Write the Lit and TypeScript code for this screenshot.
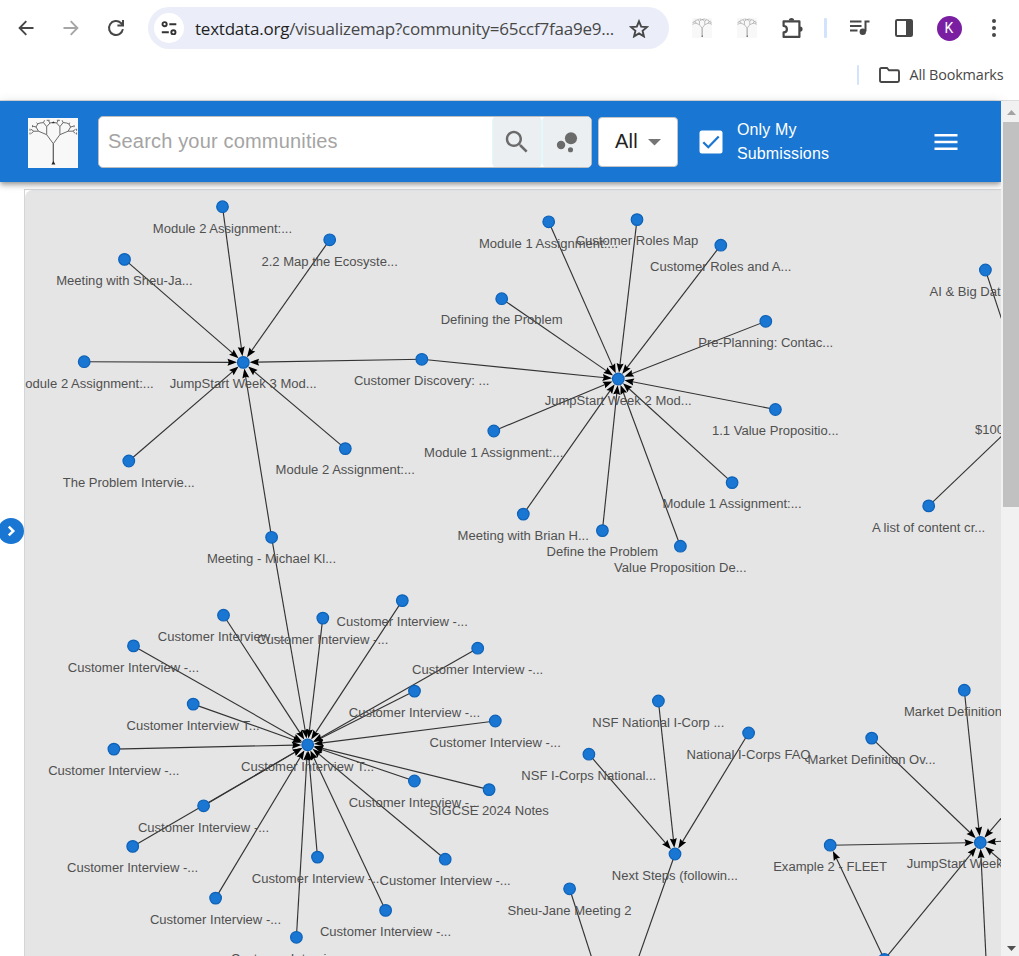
import { LitElement, html, svg, css } from "lit";
import { customElement } from "lit/decorators.js";

type GraphNode = { id: string; x: number; y: number; label: string; start?: number; dy?: number };

const CI = "Customer Interview -...";

const NODES: GraphNode[] = [
  { id: "a1", x: 222.5, y: 206.7, label: "Module 2 Assignment:..." },
  { id: "a2", x: 329.7, y: 239.8, label: "2.2 Map the Ecosyste..." },
  { id: "a3", x: 124.5, y: 259.4, label: "Meeting with Sheu-Ja..." },
  { id: "a4", x: 84.2, y: 361.7, label: "Module 2 Assignment:..." },
  { id: "A", x: 243.3, y: 362.4, label: "JumpStart Week 3 Mod..." },
  { id: "ab", x: 421.8, y: 359.3, label: "Customer Discovery: ..." },
  { id: "a5", x: 128.8, y: 461, label: "The Problem Intervie..." },
  { id: "a6", x: 345.3, y: 448.6, label: "Module 2 Assignment:...", dy: -0.5 },
  { id: "ac", x: 271.6, y: 537.3, label: "Meeting - Michael Kl..." },
  { id: "b1", x: 548.7, y: 221.8, label: "Module 1 Assignment:..." },
  { id: "b2", x: 637, y: 219.6, label: "Customer Roles Map", dy: -1 },
  { id: "b3", x: 720.8, y: 245.2, label: "Customer Roles and A..." },
  { id: "b4", x: 501.7, y: 298.7, label: "Defining the Problem", dy: -1 },
  { id: "b5", x: 765.8, y: 321.3, label: "Pre-Planning: Contac..." },
  { id: "B", x: 618.3, y: 379, label: "JumpStart Week 2 Mod..." },
  { id: "b6", x: 775.4, y: 409.5, label: "1.1 Value Propositio...", dy: -1 },
  { id: "b7", x: 493.8, y: 431, label: "Module 1 Assignment:..." },
  { id: "b8", x: 732.1, y: 482.6, label: "Module 1 Assignment:...", dy: -1 },
  { id: "b9", x: 523.3, y: 514.1, label: "Meeting with Brian H..." },
  { id: "b10", x: 602.4, y: 530.6, label: "Define the Problem", dy: -1 },
  { id: "b11", x: 680.4, y: 546.2, label: "Value Proposition De..." },
  { id: "c1", x: 223.5, y: 615.2, label: CI },
  { id: "c2", x: 322.8, y: 618.1, label: CI },
  { id: "c3", x: 402.3, y: 600.6, label: CI, dy: -1 },
  { id: "c4", x: 133.5, y: 645.9, label: CI },
  { id: "c5", x: 477.7, y: 648.2, label: CI },
  { id: "c6", x: 193.2, y: 704.1, label: "Customer Interview T..." },
  { id: "c7", x: 414.5, y: 691.1, label: CI },
  { id: "c8", x: 495.3, y: 721, label: CI },
  { id: "c9", x: 113.9, y: 749.1, label: CI },
  { id: "C", x: 307.7, y: 744.8, label: "Customer Interview T..." },
  { id: "c10", x: 414.4, y: 781, label: CI },
  { id: "c11", x: 489.1, y: 789.6, label: "SIGCSE 2024 Notes", dy: -1 },
  { id: "c12", x: 203.6, y: 805.8, label: CI },
  { id: "c13", x: 132.7, y: 846.4, label: CI },
  { id: "c14", x: 317.5, y: 857.1, label: CI },
  { id: "c15", x: 445.2, y: 859.2, label: CI },
  { id: "c16", x: 215.6, y: 898.1, label: CI },
  { id: "c17", x: 385.6, y: 910.4, label: CI },
  { id: "c18", x: 296.4, y: 937.3, label: CI },
  { id: "d1", x: 658.4, y: 701, label: "NSF National I-Corp ..." },
  { id: "d2", x: 748.6, y: 733, label: "National I-Corps FAQ" },
  { id: "d3", x: 588.9, y: 754.2, label: "NSF I-Corps National..." },
  { id: "D", x: 675, y: 854, label: "Next Steps (followin..." },
  { id: "d4", x: 569.6, y: 888.8, label: "Sheu-Jane Meeting 2" },
  { id: "d5", x: 614, y: 1027, label: "" },
  { id: "e1", x: 964.3, y: 690.2, label: "Market Definition ...", start: 904 },
  { id: "e2", x: 871.7, y: 738.1, label: "Market Definition Ov..." },
  { id: "e3", x: 830.2, y: 845.2, label: "Example 2 - FLEET" },
  { id: "E", x: 980.3, y: 842.5, label: "JumpStart Week 1 Mod...", dy: -1 },
  { id: "e4", x: 884.4, y: 959.5, label: "" },
  { id: "e5", x: 1051, y: 760, label: "" },
  { id: "e6", x: 1081, y: 836.5, label: "" },
  { id: "e7", x: 1050, y: 903.5, label: "" },
  { id: "e8", x: 989, y: 1019, label: "" },
  { id: "f1", x: 985.4, y: 270, label: "AI & Big Data ...", start: 929.5 },
  { id: "f2", x: 928.7, y: 505.9, label: "A list of content cr..." },
  { id: "F", x: 1031, y: 408, label: "$100 Challenge ...", start: 975 },
];

const EDGES: [string, string][] = [
  ...["a1", "a2", "a3", "a4", "ab", "a5", "a6", "ac"].map((s) => [s, "A"] as [string, string]),
  ...["ab", "b1", "b2", "b3", "b4", "b5", "b6", "b7", "b8", "b9", "b10", "b11"].map((s) => [s, "B"] as [string, string]),
  ["ac", "C"],
  ...Array.from({ length: 18 }, (_, i) => ["c" + (i + 1), "C"] as [string, string]),
  ["d1", "D"], ["d2", "D"], ["d3", "D"], ["D", "d5"], ["d4", "d5"],
  ...["e1", "e2", "e3", "e4", "e5", "e6", "e7", "e8"].map((s) => [s, "E"] as [string, string]),
  ["e4", "e3"], ["f1", "F"], ["f2", "F"],
];

const byId = new Map(NODES.map((n) => [n.id, n]));

/* Left half of the fractal crown; the right half is its mirror image. */
const CROWN =
  "M25.3 25.7L18.7 16.7L18.7 8.700L22 5L25.300 4.300M22 5L20.500 2.800M18.700 8.700L15.500 4.600L12 5M15.500 4.600L16.500 2.300M18.700 2.300h3" +
  "M18.700 16.700L10.500 13.200L8 9L9.800 5.800L12 5M8 9L5 8.200M9.800 5.800L8.500 4.800M10.500 13.200L5.800 13.200L3 11.300M5.800 13.200L3.200 15.500M2 10.800v2M2 14.500v2M4.500 7.200v2";

const tree = (size: number, faint: boolean) => {
  const w = faint ? 1.5 : 1;
  const c = faint ? "#999" : "#6a6a6a";
  return html`
  <svg width=${size} height=${size} viewBox="0 0 50 50">
    <rect width="50" height="50" fill="#f8f8f8"></rect>
    <path d="M25.3 45V25.500" stroke=${faint ? "#777" : "#555"} stroke-width=${faint ? 1.8 : 1.2}></path>
    <path d=${CROWN} fill="none" stroke=${c} stroke-width=${w}></path>
    <path d=${CROWN} transform="translate(50.600 0) scale(-1 1)" fill="none" stroke=${c} stroke-width=${w}></path>
    <path d="M23.400 46.600h4l-2-3.600zM23.800 5.200h3l-1.500-1.600z" fill="#222"></path>
  </svg>`;
};

@customElement("browser-bar")
class BrowserBar extends LitElement {
  static styles = css`
    :host { display: block; height: 100px; background: #fff; border-bottom: 1px solid #dcdcdc; font-family: "Open Sans", "Noto Sans", sans-serif; color: #474747; }
    .tools { display: flex; align-items: center; height: 56px; padding-left: 3px; box-sizing: border-box; }
    .cell { width: 45px; flex: none; display: flex; justify-content: center; }
    .pill { box-sizing: border-box; width: 521px; height: 42px; margin: 0 10.5px 0 10px; border-radius: 21px; background: #ebeef8; display: flex; align-items: center; padding: 0 20px 0 6px; flex: none; }
    .site { width: 30px; height: 30px; border-radius: 50%; background: #fff; display: flex; align-items: center; justify-content: center; margin-right: 11px; flex: none; }
    .url { flex: 1; font-size: 17px; letter-spacing: -0.22px; white-space: nowrap; line-height: 24px; position: relative; top: 1px; }
    .host { color: #1f1f1f; }
    .sep { width: 22px; flex: none; display: flex; justify-content: center; }
    .bar { width: 2.5px; height: 20px; border-radius: 1px; background: #d3e3fd; }
    .avatar { width: 25px; height: 25px; border-radius: 50%; background: #7b1fa2; color: #fff; font: 14px/25px Roboto, sans-serif; text-align: center; }
    .marks { display: flex; align-items: center; justify-content: flex-end; height: 37px; padding-right: 15.5px; }
    .folder { margin: 0 9.5px 0 20px; }
    .all { font-size: 14.4px; letter-spacing: -0.15px; white-space: nowrap; }
    svg { display: block; flex: none; }
  `;
  render() {
    return html`
      <div class="tools">
        <div class="cell"><svg width="16" height="16" viewBox="0 0 16 16" fill="none" stroke="#474747" stroke-width="1.9"><path d="M15.5 8H2M8.3 1.2L1.6 8l6.7 6.8"></path></svg></div>
        <div class="cell"><svg width="16" height="16" viewBox="0 0 16 16" fill="none" stroke="#a6a6a6" stroke-width="1.9"><path d="M.5 8H14M7.7 1.2L14.4 8l-6.7 6.8"></path></svg></div>
        <div class="cell"><svg width="18" height="18" viewBox="0 0 18 18" fill="none" stroke="#474747" stroke-width="2"><path d="M15.9 10.2A7 7 0 1 1 13.9 4l1.6 1.7"></path><path d="M16 1v5.6h-5.6"></path></svg></div>
        <div class="pill">
          <div class="site"><svg width="16" height="14" viewBox="0 0 16 14" fill="none" stroke="#333" stroke-width="1.9"><circle cx="3.6" cy="3.2" r="2.1"></circle><path d="M8.3 3.2h7M.8 11.3h7"></path><circle cx="12.4" cy="11.3" r="2.1"></circle></svg></div>
          <div class="url"><span class="host">textdata.org</span>/visualizemap?community=65ccf7faa9e9...</div>
          <svg width="20" height="19" viewBox="0 0 20 19" fill="none" stroke="#474747" stroke-width="1.9"><path d="M10 2.3l2.2 5.3 5.7.5-4.3 3.7 1.3 5.6-4.9-3-4.9 3 1.3-5.6L2.1 8.1l5.7-.5z"></path></svg>
        </div>
        <div class="cell">${tree(20, true)}</div>
        <div class="cell">${tree(20, true)}</div>
        <div class="cell"><svg width="22" height="22" viewBox="0 0 22 22"><path d="M2.6 4.3h15.8v15.6H2.6v-4.5c2 0 3.3-1.4 3.3-3.2S4.600 9 2.600 9z" fill="none" stroke="#474747" stroke-width="2.2" stroke-linejoin="round"></path><path d="M7.8 3.600a2.700 2.700 0 0 1 5.400 0zM19 9.500a2.600 2.600 0 0 1 0 5.200z" fill="#474747"></path></svg></div>
        <div class="sep"><div class="bar"></div></div>
        <div class="cell"><svg width="21" height="18" viewBox="0 0 21 18" fill="none" stroke="#474747" stroke-width="2"><path d="M1 2.500h11.500M1 7h11.500M1 11.500h7.500M20.500 2.500h-4v10"></path><circle cx="13.800" cy="12.700" r="3.200" fill="#474747" stroke="none"></circle></svg></div>
        <div class="cell"><svg width="18" height="18" viewBox="0 0 18 18"><rect x="1" y="1" width="16" height="16" rx="1.200" fill="none" stroke="#474747" stroke-width="2"></rect><path d="M11 1h6v16h-6z" fill="#474747"></path></svg></div>
        <div class="cell"><div class="avatar">K</div></div>
        <div class="cell"><svg width="4" height="18" viewBox="0 0 4 18" fill="#474747"><circle cx="2" cy="2" r="2"></circle><circle cx="2" cy="9" r="2"></circle><circle cx="2" cy="16" r="2"></circle></svg></div>
      </div>
      <div class="marks">
        <div class="bar"></div>
        <svg class="folder" width="21" height="16" viewBox="0 0 21 16" fill="none" stroke="#474747" stroke-width="1.900"><path d="M1 2.500Q1 1 2.400 1H8l2 2.300h8.600q1.400 0 1.400 1.400v8.900q0 1.400-1.400 1.400H2.400Q1 15 1 13.600z"></path></svg>
        <div class="all">All Bookmarks</div>
      </div>`;
  }
}

@customElement("site-header")
class SiteHeader extends LitElement {
  static styles = css`
    :host { display: flex; align-items: center; box-sizing: border-box; height: 81px; padding: 0 0 0 28px; background: #1976d2; color: #fff; font-family: "Liberation Sans", Arial, sans-serif; position: relative; box-shadow: 0 2px 4px -1px rgba(0,0,0,.25), 0 4px 5px rgba(0,0,0,.16), 0 1px 10px rgba(0,0,0,.13); }
    .logo { margin-top: 3px; flex: none; }
    .search { display: flex; box-sizing: border-box; width: 494px; height: 52px; margin: 1px 6px 0 20px; border: 1px solid #bdbdbd; border-radius: 5px; background: #fff; overflow: hidden; flex: none; }
    .placeholder { flex: 1; padding-left: 9px; font-size: 20px; letter-spacing: .18px; line-height: 49px; color: #a4a4a4; }
    .btn { width: 48px; display: flex; align-items: center; justify-content: center; background: #ebeff2; border-radius: 4px; box-shadow: 0 0 0 1px #e3f8fb; }
    .btn + .btn { margin-left: 2px; }
    .select { display: flex; align-items: center; box-sizing: border-box; width: 80px; height: 50px; margin-top: 1px; padding-left: 16px; border: 1px solid #c4c4c4; border-radius: 4px; background: #fff; color: #222; font-size: 20px; flex: none; }
    .all { letter-spacing: .2px; width: 33px; position: relative; top: -1px; }
    .check { margin: 1px 14px 0 21px; }
    .label { width: 197px; font-size: 16px; letter-spacing: .12px; line-height: 24px; }
    .menu { margin-top: 1px; }
    svg { display: block; flex: none; }
  `;
  render() {
    return html`
      <div class="logo">${tree(50, false)}</div>
      <div class="search">
        <div class="placeholder">Search your communities</div>
        <div class="btn"><svg width="30" height="30" viewBox="0 0 24 24" fill="#6b6b6b"><path d="M15.500 14h-.790l-.280-.270C15.410 12.590 16 11.110 16 9.500 16 5.910 13.090 3 9.500 3S3 5.910 3 9.500 5.910 16 9.500 16c1.610 0 3.090-.590 4.230-1.570l.270.280v.790l5 4.990L20.490 19zm-6 0C7.010 14 5 11.990 5 9.500S7.010 5 9.500 5 14 7.010 14 9.500 11.990 14 9.500 14"></path></svg></div>
        <div class="btn"><svg width="28" height="28" viewBox="0 0 24 24" fill="#6b6b6b"><circle cx="6.900" cy="14.600" r="3.600"></circle><circle cx="15" cy="18.600" r="2.200"></circle><circle cx="15.400" cy="8.800" r="5.200"></circle></svg></div>
      </div>
      <div class="select"><span class="all">All</span><svg width="13" height="7" viewBox="0 0 13 7"><path d="M0 0h13L6.500 6.500z" fill="#757575"></path></svg></div>
      <svg class="check" width="24" height="24" viewBox="0 0 24 24"><rect x=".5" y=".5" width="23" height="23" rx="2.500" fill="#fff"></rect><path d="M4.300 12.200l5 5L19.700 6.500" fill="none" stroke="#1976d2" stroke-width="2.300"></path></svg>
      <div class="label">Only My<br>Submissions</div>
      <svg class="menu" width="24" height="16" viewBox="0 0 24 16"><path d="M.5 1.300h23M.5 8h23M.5 14.700h23" stroke="#fff" stroke-width="2.400"></path></svg>`;
  }
}

@customElement("community-graph")
class CommunityGraph extends LitElement {
  static styles = css`
    :host { display: block; box-sizing: border-box; width: 977px; height: 767px; border: solid #d3d6d8; border-width: 1px 0 0 1px; background: #fff; overflow: hidden; }
    .canvas { display: block; background: #e5e5e5; border-top-left-radius: 8px; }
    .label { font: 13.05px "Liberation Sans", Arial, sans-serif; fill: #505050; }
    .mid { text-anchor: middle; }
    .edge { stroke: #333; stroke-width: 1.150; }
    .tip { fill: #000; }
    .node { fill: #1976d2; stroke: #0d62b8; stroke-width: 1.200; }
  `;
  edge([from, to]: [string, string]) {
    const s = byId.get(from)!;
    const t = byId.get(to)!;
    const angle = Math.atan2(t.y - s.y, t.x - s.x);
    const deg = (angle * 180) / Math.PI;
    const ex = t.x - Math.cos(angle) * 13;
    const ey = t.y - Math.sin(angle) * 13;
    return svg`<line class="edge" x1=${s.x} y1=${s.y} x2=${ex} y2=${ey}></line>
      <path class="tip" d="M-6.300 0L-15.800 -3.500L-14.500 0L-15.800 3.500z" transform="translate(${t.x} ${t.y}) rotate(${deg})"></path>`;
  }
  node(n: GraphNode) {
    const base = Math.round(n.y + 26 + (n.dy ?? 0));
    return svg`<circle class="node" cx=${n.x} cy=${n.y} r="5.800"></circle>
      ${n.start
        ? svg`<text class="label" x=${n.start} y=${base}>${n.label}</text>`
        : svg`<text class="label mid" x=${n.x - 0.1} y=${base}>${n.label}</text>`}`;
  }
  render() {
    return html`<svg class="canvas" width="976" height="766" viewBox="25 190 976 766">
      ${EDGES.map((e) => this.edge(e))}${NODES.map((n) => this.node(n))}
    </svg>`;
  }
}

@customElement("app-root")
class AppRoot extends LitElement {
  static styles = css`
    :host { display: block; height: 956px; overflow: hidden; background: #fff; }
    .body { display: flex; height: 855px; }
    .page { width: 1001px; flex: none; }
    .main { display: flex; height: 774px; }
    .side { width: 24px; flex: none; display: flex; align-items: center; overflow: hidden; }
    .toggle { display: block; margin: 0 0 76px -2px; flex: none; }
    .graph { margin-top: 7px; }
    .scroll { width: 18px; background: #f1f1f1; display: flex; flex-direction: column; align-items: center; box-sizing: border-box; padding: 9px 0 5px; position: relative; }
    .thumb { align-self: flex-end; width: 16px; height: 385px; background: #c1c1c1; margin: 7px 0 auto; }
    svg { display: block; flex: none; }
    .arrow { margin-left: 2px; }
  `;
  render() {
    return html`
      <browser-bar></browser-bar>
      <div class="body">
        <div class="page">
          <site-header></site-header>
          <div class="main">
            <div class="side">
              <svg class="toggle" width="26" height="26" viewBox="0 0 26 26"><circle cx="13" cy="13" r="13" fill="#1976d2"></circle><path d="M10.800 8.600l4.500 4.400-4.500 4.400" fill="none" stroke="#fff" stroke-width="2.500"></path></svg>
            </div>
            <community-graph class="graph"></community-graph>
          </div>
        </div>
        <div class="scroll">
          <svg class="arrow" width="9" height="5" viewBox="0 0 9 5"><path d="M4.500 0L9 5H0z" fill="#a3a3a3"></path></svg>
          <div class="thumb"></div>
          <svg class="arrow" width="9" height="5" viewBox="0 0 9 5"><path d="M4.500 5L9 0H0z" fill="#505050"></path></svg>
        </div>
      </div>`;
  }
}
